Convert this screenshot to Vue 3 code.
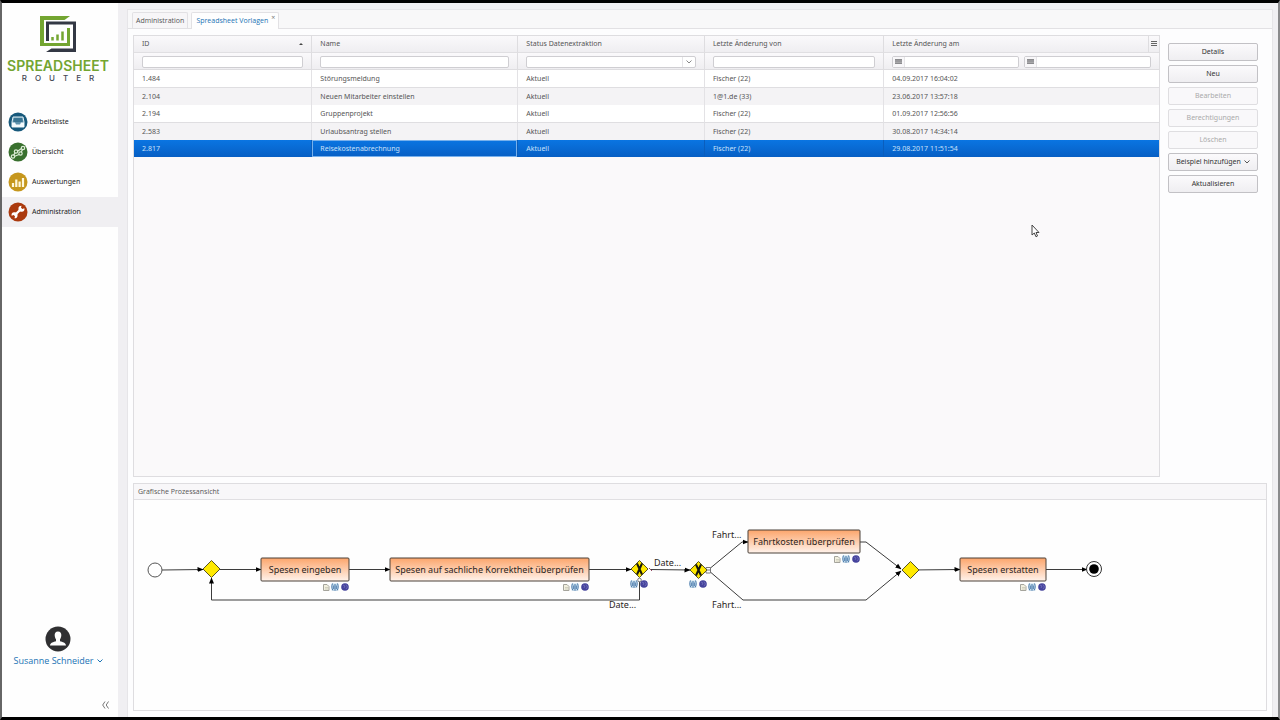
<script setup>
import { ref } from 'vue'

const nav = [
  { label: 'Arbeitsliste', icon: 'inbox', color: '#17597b' },
  { label: 'Übersicht', icon: 'flow', color: '#39702e' },
  { label: 'Auswertungen', icon: 'chart', color: '#c6971d' },
  { label: 'Administration', icon: 'wrench', color: '#ab3a0e' }
]
const activeNav = ref('Administration')

const rows = [
  ['1.484', 'Störungsmeldung', 'Aktuell', 'Fischer (22)', '04.09.2017 16:04:02'],
  ['2.104', 'Neuen Mitarbeiter einstellen', 'Aktuell', '1@1.de (33)', '23.06.2017 13:57:18'],
  ['2.194', 'Gruppenprojekt', 'Aktuell', 'Fischer (22)', '01.09.2017 12:56:56'],
  ['2.583', 'Urlaubsantrag stellen', 'Aktuell', 'Fischer (22)', '30.08.2017 14:34:14'],
  ['2.817', 'Reisekostenabrechnung', 'Aktuell', 'Fischer (22)', '29.08.2017 11:51:54']
]
const selected = ref('2.817')

const actions = [
  { label: 'Details' },
  { label: 'Neu' },
  { label: 'Bearbeiten', disabled: true },
  { label: 'Berechtigungen', disabled: true },
  { label: 'Löschen', disabled: true },
  { label: 'Beispiel hinzufügen', menu: true },
  { label: 'Aktualisieren' }
]

const tasks = [
  { label: 'Spesen eingeben', x: 127, y: 58, w: 88 },
  { label: 'Spesen auf sachliche Korrektheit überprüfen', x: 256, y: 58, w: 199 },
  { label: 'Fahrtkosten überprüfen', x: 614, y: 30, w: 112 },
  { label: 'Spesen erstatten', x: 826, y: 58, w: 86 }
]
const edges = [
  'M28 70L69 69.5', 'M86 69.5H127', 'M215 69.5H256', 'M455 69.5H497',
  'M516 69.5L556 70', 'M574 70L608 42H614', 'M776 70L826 69.5', 'M912 69.5H953',
  'M505.5 79V100H77.5V78'
]
const joins = ['M574 70L609 100H732L767 71', 'M726 42H732L767 69']
const gateways = [
  { x: 77, y: 69 }, { x: 505, y: 69, exclusive: true }, { x: 564, y: 70, exclusive: true }, { x: 776, y: 70 }
]
const badges = [{ x: 505, y: 84 }, { x: 564, y: 84 }]
const edgeLabels = [
  { text: 'Date...', x: 520, y: 66 }, { text: 'Date...', x: 475, y: 108 },
  { text: 'Fahrt...', x: 578, y: 38 }, { text: 'Fahrt...', x: 578, y: 108 }
]
</script>

<template>
  <div class="app">
    <aside class="sidebar">
      <div class="brand">
        <svg class="logo" width="38" height="38" viewBox="0 0 38 38" fill="none" aria-hidden="true">
          <path d="M1 1H31L25.500 5H5V28H28V13H31V31H1Z" fill="#73a531" />
          <path d="M7 6.500H37V37H7L12.500 33.500H34V9.500H10V26H7Z" fill="#333844" />
          <path d="M13.500 25.500V22M18.500 25.500V19.500M23.500 25.500V16.500M29.500 31V13" stroke="#73a531" stroke-width="2.500" />
        </svg>
        <div class="brand-name">SPREADSHEET</div>
        <div class="brand-sub">ROUTER</div>
      </div>
      <nav class="nav">
        <a v-for="n in nav" :key="n.label" href="#" :class="{ active: activeNav === n.label }" @click.prevent="activeNav = n.label">
          <svg width="20" height="20" viewBox="0 0 20 20" fill="none" aria-hidden="true">
            <circle cx="10" cy="10" r="9.500" :fill="n.color" />
            <g v-if="n.icon === 'inbox'">
              <path d="M5 5H15L16 10V15H4V10Z" fill="#5f93ad" stroke="#e4f1f6" stroke-width="1" />
              <path d="M6 7H14M5.500 9H14.500" stroke="#17597b" stroke-width="1" />
              <path d="M4 10.500H7L8 12.500H12L13 10.500H16V15H4Z" fill="#f4fbfd" />
            </g>
            <g v-else-if="n.icon === 'flow'" stroke="#dcebd5" stroke-width="1.200">
              <circle cx="5" cy="14.500" r="1.700" /><circle cx="8" cy="9.500" r="1.700" />
              <circle cx="12.500" cy="11.500" r="1.700" /><circle cx="15" cy="6" r="1.700" />
              <path d="M5.500 13L7.300 11M6.700 14.300L11 12.500M9.600 9.200L13.400 6.500M13.200 10L14.500 7.600" />
            </g>
            <path v-else-if="n.icon === 'chart'" d="M5 15V11M8.300 15V7.500M11.600 15V9.500M15 15V6" stroke="#fff8dc" stroke-width="2.200" />
            <g v-else>
              <path d="M6.500 13.500L13.500 6.500" stroke="#fff" stroke-width="2.400" />
              <path d="M16.400 6.200A3 3 0 1 1 13.500 3.700L13 6L14.200 7Z" fill="#fff" />
              <path d="M3.600 13.800A3 3 0 1 1 6.500 16.300L7 14L5.800 13Z" fill="#fff" />
            </g>
          </svg>
          <span>{{ n.label }}</span>
        </a>
      </nav>
      <div class="user">
        <svg width="26" height="26" viewBox="0 0 26 26" aria-hidden="true">
          <circle cx="13" cy="13" r="12.500" fill="#303032" />
          <path d="M13 5.500C15.500 5.500 16.500 7.200 16.300 9.500C16.200 11.500 15.500 12.500 15 13.300V15.200C17.500 16 20.800 16.500 21 19.500H5C5.200 16.500 8.500 16 11 15.200V13.300C10.500 12.500 9.800 11.500 9.700 9.500C9.500 7.200 10.500 5.500 13 5.500Z" fill="#fff" />
        </svg>
        <button type="button" class="user-name">Susanne Schneider
          <svg width="6" height="4" viewBox="0 0 6 4" fill="none" stroke="currentColor" aria-hidden="true"><path d="M0.500 0.500L3 3L5.500 0.500" /></svg>
        </button>
      </div>
      <button type="button" class="collapse" aria-label="Einklappen">
        <svg width="7" height="8" viewBox="0 0 7 8" fill="none" stroke="#777" aria-hidden="true"><path d="M3 0.500L0.700 4L3 7.500M6.500 0.500L4.200 4L6.500 7.500" /></svg>
      </button>
    </aside>

    <main class="main">
      <div class="tabs" role="tablist">
        <button type="button" role="tab" class="tab">Administration</button>
        <button type="button" role="tab" class="tab current" aria-selected="true">Spreadsheet Vorlagen<span class="close">×</span></button>
      </div>
      <div class="content">
        <section class="upper">
          <div class="grid">
            <table>
              <colgroup><col class="c1"><col class="c2"><col class="c3"><col class="c4"><col class="c5"></colgroup>
              <thead>
                <tr class="heads">
                  <th><div class="head">ID<i class="sort"></i></div></th>
                  <th>Name</th>
                  <th>Status Datenextraktion</th>
                  <th>Letzte Änderung von</th>
                  <th class="last">
                    <div class="head">Letzte Änderung am
                      <button type="button" class="cols" aria-label="Spalten"><svg width="6" height="6" viewBox="0 0 6 6" stroke="#666" aria-hidden="true"><path d="M0 0.500H6M0 2.500H6M0 4.500H6" /></svg></button>
                    </div>
                  </th>
                </tr>
                <tr class="filters">
                  <th><input type="text" aria-label="ID filtern"></th>
                  <th><input type="text" aria-label="Name filtern"></th>
                  <th>
                    <div class="combo">
                      <select aria-label="Status filtern"><option></option></select>
                      <svg width="6" height="4" viewBox="0 0 6 4" fill="none" stroke="#888" aria-hidden="true"><path d="M0.500 0.500L3 3L5.500 0.500" /></svg>
                    </div>
                  </th>
                  <th><input type="text" aria-label="Letzte Änderung von filtern"></th>
                  <th class="last">
                    <div class="dates">
                      <div v-for="d in ['von', 'bis']" :key="d" class="date">
                        <span class="cal"><svg width="7" height="5" viewBox="0 0 7 5" aria-hidden="true"><path d="M0 0H7V5H0Z" fill="#8b8b8e" /><path d="M0 2H7M0 3.500H7" stroke="#c5c5c7" stroke-width="0.500" /></svg></span>
                        <input type="text" :aria-label="'Letzte Änderung ' + d">
                      </div>
                    </div>
                  </th>
                </tr>
              </thead>
              <tbody>
                <tr v-for="r in rows" :key="r[0]" :class="{ selected: selected === r[0] }" @click="selected = r[0]">
                  <td v-for="(c, i) in r" :key="i">{{ c }}</td>
                </tr>
              </tbody>
            </table>
          </div>
          <div class="actions">
            <button v-for="a in actions" :key="a.label" type="button" :disabled="a.disabled">{{ a.label }}
              <svg v-if="a.menu" width="6" height="4" viewBox="0 0 6 4" fill="none" stroke="#555" aria-hidden="true"><path d="M0.500 0.500L3 3L5.500 0.500" /></svg>
            </button>
          </div>
        </section>

        <section class="panel">
          <h2>Grafische Prozessansicht</h2>
          <svg class="diagram">
            <defs>
              <linearGradient id="task" x1="0" y1="0" x2="0" y2="1">
                <stop offset="0" stop-color="#fca56b" /><stop offset="1" stop-color="#fff3ec" />
              </linearGradient>
              <marker id="arrow" markerUnits="userSpaceOnUse" markerWidth="6" markerHeight="6" refX="5.500" refY="3" orient="auto"><path d="M0 0.500L6 3L0 5.500Z" fill="#000" /></marker>
              <g id="doc"><path d="M0.500 0.500H4L6 2.500V6.500H0.500Z" fill="#f1efdf" stroke="#a5a49c" /><path d="M2 3.500H5M2 5H5" stroke="#bdbba8" stroke-width="0.600" /></g>
              <g id="tool"><path d="M0.500 0.500H7.500V7.500H0.500Z" fill="#c4dceb" /><path d="M1.500 0.500C0.500 3 0.500 5 2 7.500M6.500 0.500C7.500 3 7.500 5 6 7.500M4 1V8M2.700 2.500V6M5.300 2.500V6" fill="none" stroke="#4e7cad" stroke-width="1" /></g>
              <g id="globe"><circle cx="4" cy="4" r="3.800" fill="#45439c" /><path d="M2 2L4 3L3 5M5 1.500L6.500 4L5 6" fill="none" stroke="#7572bd" stroke-width="0.800" /></g>
            </defs>
            <g fill="none" stroke="#3c3c3c">
              <path v-for="e in edges" :key="e" :d="e" marker-end="url(#arrow)" />
              <path v-for="j in joins" :key="j" :d="j" marker-end="url(#arrow)" />
              <circle cx="21" cy="70" r="7" fill="#fff" stroke="#555" />
              <path d="M572 67.500H576.500V73H572ZM572 70H577" fill="#fff" stroke="#777" />
              <path d="M515 68L518 71" stroke="#934b63" />
            </g>
            <g v-for="(g, i) in gateways" :key="i" :transform="`translate(${g.x} ${g.y})`">
              <path d="M0.500 -8.500L9 0L0.500 8.500L-8 0Z" fill="#ffe900" stroke="#5a5423" />
              <path v-if="g.exclusive" d="M-2 -5.500L3 5.500M3 -5.500L-2 5.500" fill="none" stroke="#18180c" stroke-width="2" />
            </g>
            <circle cx="505.500" cy="80" r="1.800" fill="#fff" stroke="#777" />
            <g v-for="t in tasks" :key="t.label" :transform="`translate(${t.x} ${t.y})`">
              <rect x="0" y="0" :width="t.w" height="23" rx="1" fill="url(#task)" stroke="#4a4039" />
              <text :x="t.w / 2" y="15" text-anchor="middle">{{ t.label }}</text>
              <use href="#doc" :x="t.w - 26" y="26" /><use href="#tool" :x="t.w - 18" y="25" /><use href="#globe" :x="t.w - 8" y="25" />
            </g>
            <g v-for="b in badges" :key="b.x" :transform="`translate(${b.x} ${b.y})`">
              <use href="#tool" x="-9" y="-4" /><use href="#globe" x="1" y="-4" />
            </g>
            <text v-for="(l, i) in edgeLabels" :key="i" :x="l.x" :y="l.y">{{ l.text }}</text>
            <circle cx="960" cy="69" r="7.500" fill="#fff" stroke="#333" /><circle cx="960" cy="69" r="4.800" fill="#000" />
          </svg>
        </section>
      </div>
    </main>
    <svg class="pointer" width="9" height="14" viewBox="0 0 9 14" aria-hidden="true"><path d="M1 1V11L3.300 9L5 12.800L6.500 12L5 8.500H8Z" fill="#fff" stroke="#444" /></svg>
  </div>
</template>

<style>
body { margin: 0; background: #000; }
</style>

<style scoped>
* { box-sizing: border-box; }
.app {
  position: relative; display: flex; min-height: 100vh; background: #f0eff2;
  border: solid #000; border-width: 3px 2px 3px 2px; border-left-color: #666; border-right-color: #8a8a8c;
  font: 7px/10px "Noto Sans", "Open Sans", sans-serif; color: #555;
}
button, input, select { font: inherit; color: inherit; margin: 0; padding: 0; }
button { border: 0; background: none; }
svg { flex: none; }
.sidebar { width: 116px; background: #fefefe; display: flex; flex-direction: column; }
.brand { display: flex; flex-direction: column; align-items: center; padding: 12px 4px 0 0; height: 104px; color: #73a531; }
.brand-name { font: 600 14px/16px Inter, sans-serif; margin-top: 5px; }
.brand-sub { font: 500 8px/9px Inter, sans-serif; color: #444854; letter-spacing: 8px; padding-left: 8px; }
.nav a { display: flex; align-items: center; gap: 4px; height: 30px; padding-left: 6px; color: #222; text-decoration: none; }
.nav a.active { background: #f0eff2; }
.user { margin-top: auto; padding-right: 4px; display: flex; flex-direction: column; align-items: center; gap: 2px; }
.user-name { display: flex; align-items: center; gap: 3px; font: 9px/14px "Open Sans", sans-serif; color: #1a73b5; }
.collapse { align-self: flex-end; margin: 32px 9px 7px 0; height: 10px; display: flex; align-items: center; }
.main { flex: 1; min-width: 0; margin: 6px 5px 0 9px; background: #fdfdfe; border: 1px solid #e6e5e8; border-bottom: 0; display: flex; flex-direction: column; }
.tabs { display: flex; align-items: flex-end; gap: 3px; height: 19px; padding-left: 4px; background: #f8f8f9; border-bottom: 1px solid #e2e1e4; font-family: "Open Sans", sans-serif; }
.tab { height: 16px; padding: 0 3px; border: 1px solid #e2e1e4; border-bottom: 0; border-radius: 2px 2px 0 0; background: #f7f6f8; }
.tab.current { height: 17px; margin-bottom: -1px; background: #fefefe; color: #1a73b5; padding: 0 3px 0 4px; display: flex; align-items: center; gap: 3px; }
.close { color: #777; align-self: flex-start; line-height: 10px; }
.content { flex: 1; display: flex; flex-direction: column; gap: 6px; padding: 6px 5px 6px; }
.upper { flex: 442 1 0; display: flex; }
.grid { flex: 1; min-width: 0; border: 1px solid #dedde0; background: #faf9fa; }
table { width: 100%; table-layout: fixed; border-collapse: separate; border-spacing: 0; }
.c1 { width: 17.4%; } .c2 { width: 20.1%; } .c3 { width: 18.2%; } .c4 { width: 17.5%; } .c5 { width: 26.8%; }
th { font-weight: 400; text-align: left; padding: 0 8px; height: 17px; border-right: 1px solid #dedde0; background: linear-gradient(#faf9fb, #efeef1); }
.heads th { border-bottom: 1px solid #e0dfe2; }
.filters th { border-bottom: 1px solid #dedde0; padding-top: 1px; }
.last { border-right: 0; }
.heads .last { padding-right: 0; }
.head { display: flex; align-items: center; justify-content: space-between; }
.sort { border: 2px solid transparent; border-top: 0; border-bottom: 2px solid #444; }
.cols { width: 11px; height: 16px; border-left: 1px solid #dedde0; display: flex; align-items: center; justify-content: center; }
input, select { display: block; width: 100%; height: 12px; border: 1px solid #cfced2; border-radius: 2px; background: #fff; appearance: none; }
.combo { display: flex; align-items: center; position: relative; }
.combo svg { position: absolute; right: 4px; }
.combo::after { content: ""; position: absolute; right: 13px; height: 10px; border-left: 1px solid #e6e5e8; }
.dates { display: flex; gap: 5px; }
.date { flex: 1; display: flex; border: 1px solid #cfced2; border-radius: 2px; background: #fff; height: 12px; }
.date input { border: 0; height: 10px; min-width: 0; }
.cal { width: 12px; flex: none; border-right: 1px solid #e6e5e8; background: #f8f7f9; display: flex; align-items: center; justify-content: center; }
td { height: 17px; padding: 0 8px; background: #fff; border-right: 1px solid #e3e2e5; white-space: nowrap; }
td:last-child { border-right: 0; }
tbody tr:nth-child(even) td { height: 18px; background: #f4f3f5; border-top: 1px solid #dfdee1; }
tbody tr.selected td { background: linear-gradient(#0a75e2, #075fc4); color: #c9e1fa; border-right-color: #0a5ebd; }
tbody tr.selected td:nth-child(2) { box-shadow: inset 0 0 0 1px #78b1ec; }
.actions { width: 107px; flex: none; padding: 8px 9px 0 8px; display: flex; flex-direction: column; gap: 4px; }
.actions button { height: 18px; border: 1px solid #c2c1c5; border-radius: 2px; background: linear-gradient(#fbfafc, #efeef1); color: #333; display: flex; align-items: center; justify-content: center; gap: 3px; white-space: nowrap; }
.actions button:disabled { color: #aaa; border-color: #dfdee1; background: #f9f8fa; }
.panel { flex: 226 1 0; border: 1px solid #dedde0; background: #fefefe; display: flex; flex-direction: column; }
.panel h2 { margin: 0; font: inherit; font-family: "Open Sans", sans-serif; line-height: 15px; padding-left: 4px; border-bottom: 1px solid #e0dfe2; background: #f8f7f9; }
.diagram { flex: 1; width: 100%; min-height: 120px; overflow: hidden; }
.diagram text { font: 9px "Noto Sans", sans-serif; fill: #2b2522; }
.pointer { position: absolute; left: 1029px; top: 221px; }
</style>
